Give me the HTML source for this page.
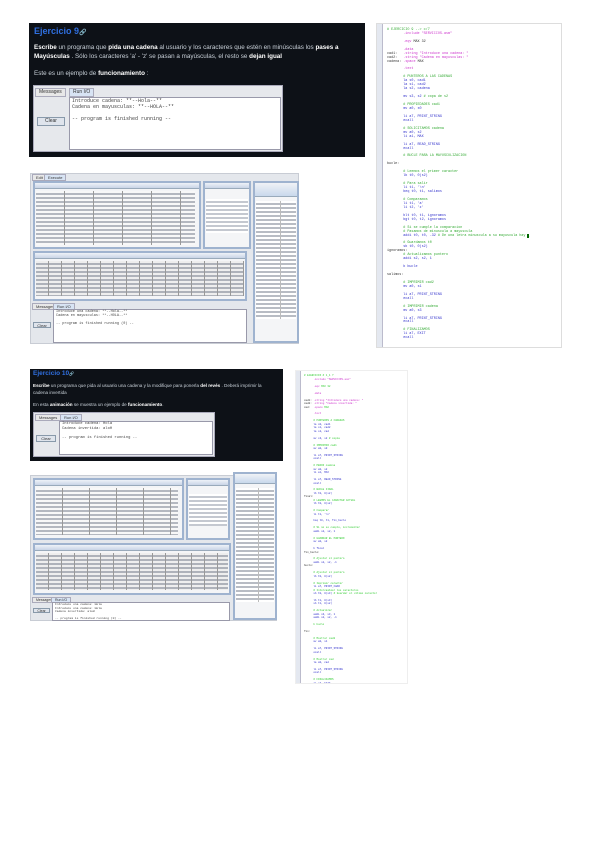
<!DOCTYPE html>
<html><head><meta charset="utf-8"><style>
*{margin:0;padding:0;box-sizing:border-box}
body{width:600px;height:848px;background:#fff;position:relative;overflow:hidden;font-family:"Liberation Sans",sans-serif}
.abs{position:absolute}
.dark{background:#0d1117;color:#c9d1d9}
.ttl{color:#2f6fe0;font-weight:bold}
.p{font-size:6.3px;white-space:nowrap;color:#c9d1d9}
.p b{color:#fff}
.win{background:#e6e8ec;border:1px solid #aab}
.tab{position:absolute;font-size:5px;border:1px solid #aab;background:#e8e8e8;padding:0 3px;line-height:7px;color:#333}
.ta{position:absolute;background:#fff;border:1px solid #99a;font-family:"Liberation Mono",monospace;color:#444;white-space:pre;font-size:5px;line-height:6px;padding-left:2px}
.btn{position:absolute;background:#dfe4ec;border:1px solid #8899aa;font-size:5px;text-align:center;color:#333}
.sim{background:#e4e7ec;border:1px solid #c8ccd4}
.pan{position:absolute;background:#f4f5f7;border:2px solid #9fb3cf}
.hdr{position:absolute;left:0;right:0;top:0;height:6px;background:linear-gradient(#eef2f8,#c8d4e6);border-bottom:1px solid #9ab}
.rows{position:absolute;left:1px;right:1px;bottom:1px;background:repeating-linear-gradient(#fff 0 2px,#c4c8d0 2px 4px)}
.grid{position:absolute;background:repeating-linear-gradient(90deg,transparent 0 12px,#999 12px 13px),repeating-linear-gradient(#eee 0 2px,#aeb2ba 2px 4px)}
.code{position:absolute;background:#fff;border:1px solid #ddd;font-family:"Liberation Mono",monospace;overflow:hidden}
.gut{position:absolute;left:0;top:0;bottom:0;background:#e4e8f0;border-right:1px solid #bbc}
.ln{position:absolute;white-space:pre}
</style></head><body>

<!-- Ejercicio 9 -->
<div class="abs dark" style="left:29px;top:23px;width:336px;height:134px"></div>
<div class="abs ttl" style="left:34px;top:26px;font-size:9px">Ejercicio 9<span style="font-size:6px;color:#aaa">🔗</span></div>
<div class="abs p" style="left:34px;top:44px"><b>Escribe</b> un programa que <b>pida una cadena</b> al usuario y los caracteres que estén en minúsculas los <b>pases a</b></div>
<div class="abs p" style="left:34px;top:53px"><b>Mayúsculas</b> . Sólo los caracteres 'a' - 'z' se pasan a mayúsculas, el resto se <b>dejan igual</b></div>
<div class="abs p" style="left:34px;top:70px">Este es un ejemplo de <b>funcionamiento</b> :</div>
<div class="abs win" style="left:33px;top:85px;width:250px;height:67px">
 <div class="tab" style="left:1px;top:2px">Messages</div>
 <div class="tab" style="left:35px;top:2px;background:#d8e4f4">Run I/O</div>
 <div class="btn" style="left:3px;top:31px;width:28px;height:9px;line-height:7px">Clear</div>
 <div class="ta" style="left:35px;top:11px;width:212px;height:53px">Introduce cadena: **--Hola--**
Cadena en mayusculas: **--HOLA--**

-- program is finished running --</div>
</div>

<!-- Simulator 1 -->
<div class="abs sim" style="left:30px;top:173px;width:269px;height:171px">
 <div class="tab" style="left:1px;top:0px;font-size:4px;line-height:5px">Edit</div>
 <div class="tab" style="left:13px;top:0px;font-size:4px;line-height:5px;background:#d8e4f4">Execute</div>
 <div class="pan" style="left:2px;top:7px;width:168px;height:68px"><div class="hdr"></div><div class="grid" style="left:1px;right:4px;top:8px;bottom:2px;background:repeating-linear-gradient(90deg,transparent 0 28px,#999 28px 29px),repeating-linear-gradient(#f8f8f8 0 2px,#b4b8c0 2px 4px)"></div></div>
 <div class="pan" style="left:172px;top:7px;width:48px;height:68px"><div class="hdr"></div><div class="rows" style="top:16px;bottom:14px"></div></div>
 <div class="pan" style="left:2px;top:77px;width:214px;height:50px"><div class="hdr"></div><div class="grid" style="left:1px;right:1px;top:8px;bottom:3px"></div></div>
 <div class="pan" style="left:222px;top:7px;width:46px;height:162px"><div class="hdr" style="height:14px;background:linear-gradient(#f0f2f6,#c8d8ec)"></div><div class="rows" style="top:18px;bottom:22px;background:repeating-linear-gradient(90deg,transparent 0 24px,#bbb 24px 25px),repeating-linear-gradient(#fff 0 2px,#b8bcc4 2px 4px)"></div></div>
 <div class="tab" style="left:1px;top:129px;font-size:4px;line-height:5px">Messages</div>
 <div class="tab" style="left:22px;top:129px;font-size:4px;line-height:5px;background:#d8e4f4">Run I/O</div>
 <div class="btn" style="left:2px;top:148px;width:18px;height:6px;font-size:4px;line-height:5px">Clear</div>
 <div class="ta" style="left:22px;top:135px;width:194px;height:34px;font-size:3.5px;line-height:4px">Introduce una cadena: **--Hola--**
Cadena en mayusculas: **--HOLA--**

-- program is finished running (0) --</div>
</div>

<!-- Code panel 1 -->
<div class="code" style="left:376px;top:23px;width:186px;height:325px;font-size:3.4px">
 <div class="gut" style="width:6px"></div>
 <div class="ln" style="left:10px;top:1px;line-height:3.95px;color:#3a3">
# EJERCICIO 9 --> c/7
<span style="color:#c3c">        .include "SERVICIOS.asm"</span>

<span style="color:#c3c">        .eqv</span> <span style="color:#333">MAX 32</span>

<span style="color:#c3c">        .data</span>
<span style="color:#333">cad1:</span>   <span style="color:#c3c">.string "Introduce una cadena: "</span>
<span style="color:#333">cad2:</span>   <span style="color:#c3c">.string "Cadena en mayusculas: "</span>
<span style="color:#333">cadena:</span> <span style="color:#c3c">.space</span> <span style="color:#333">MAX</span>

<span style="color:#c3c">        .text</span>

        # PUNTEROS A LAS CADENAS
<span style="color:#33c">        la s0, cad1
        la s1, cad2
        la s2, cadena</span>

<span style="color:#33c">        mv s3, s2</span> # copa de s2

        # PROPIEDADES cad1
<span style="color:#33c">        mv a0, s0</span>

<span style="color:#33c">        li a7, PRINT_STRING
        ecall</span>

        # SOLICITAMOS cadena
<span style="color:#33c">        mv a0, s2
        li a1, MAX</span>

<span style="color:#33c">        li a7, READ_STRING
        ecall</span>

        # BUCLE PARA LA MAYUSCULIZACION

<span style="color:#333">bucle:</span>

        # Leemos el primer caracter
<span style="color:#33c">        lb t0, 0(s2)</span>

        # Para salir
<span style="color:#33c">        li t1, '\n'
        beq t0, t1, salimos</span>

        # Comparamos
<span style="color:#33c">        li t1, 'a'
        li t2, 'z'</span>

<span style="color:#33c">        blt t0, t1, ignoramos
        bgt t0, t2, ignoramos</span>

        # Si se cumple la comparacion
        # Pasamos de minuscula a mayuscula
<span style="color:#33c">        addi t0, t0, -32</span> # De una letra minuscula a su mayuscula hay <span style="background:#060;color:#060">_</span>

        # Guardamos t0
<span style="color:#33c">        sb t0, 0(s2)</span>
<span style="color:#333">ignoramos:</span>
        # Actualizamos puntero
<span style="color:#33c">        addi s2, s2, 1</span>

<span style="color:#33c">        b bucle</span>

<span style="color:#333">salimos:</span>

        # IMPRIMIR cad2
<span style="color:#33c">        mv a0, s1</span>

<span style="color:#33c">        li a7, PRINT_STRING
        ecall</span>

        # IMPRIMIR cadena
<span style="color:#33c">        mv a0, s3</span>

<span style="color:#33c">        li a7, PRINT_STRING
        ecall</span>

        # FINALIZAMOS
<span style="color:#33c">        li a7, EXIT
        ecall</span></div>
</div>

<!-- Ejercicio 10 -->
<div class="abs dark" style="left:30px;top:369px;width:253px;height:92px"></div>
<div class="abs ttl" style="left:33px;top:370px;font-size:6.5px">Ejercicio 10<span style="font-size:4px;color:#aaa">🔗</span></div>
<div class="abs p" style="left:33px;top:383px;font-size:4.6px"><b>Escribe</b> un programa que pida al usuario una cadena y la modifique para ponerla <b>del revés</b> . Deberá imprimir la</div>
<div class="abs p" style="left:33px;top:390px;font-size:4.6px">cadena invertida</div>
<div class="abs p" style="left:33px;top:402px;font-size:4.6px">En esta <b>animación</b> se muestra un ejemplo de <b>funcionamiento</b>.</div>
<div class="abs win" style="left:33px;top:412px;width:182px;height:45px">
 <div class="tab" style="left:1px;top:1px;font-size:4px;line-height:5px">Messages</div>
 <div class="tab" style="left:26px;top:1px;font-size:4px;line-height:5px;background:#d8e4f4">Run I/O</div>
 <div class="btn" style="left:2px;top:22px;width:20px;height:7px;font-size:4px;line-height:6px">Clear</div>
 <div class="ta" style="left:25px;top:8px;width:154px;height:34px;font-size:3.8px;line-height:4.5px">Introduce cadena: Hola
Cadena invertida: aloH

-- program is finished running --</div>
</div>

<!-- Simulator 2 -->
<div class="abs sim" style="left:30px;top:475px;width:247px;height:146px">
 <div class="pan" style="left:2px;top:2px;width:151px;height:62px"><div class="hdr"></div><div class="grid" style="left:1px;right:4px;top:8px;bottom:3px;background:repeating-linear-gradient(90deg,transparent 0 26px,#999 26px 27px),repeating-linear-gradient(#f8f8f8 0 2px,#b4b8c0 2px 4px)"></div></div>
 <div class="pan" style="left:155px;top:2px;width:44px;height:62px"><div class="hdr"></div><div class="rows" style="top:14px;bottom:12px"></div></div>
 <div class="pan" style="left:2px;top:67px;width:198px;height:52px"><div class="hdr"></div><div class="grid" style="left:1px;right:1px;top:8px;bottom:3px"></div></div>
 <div class="pan" style="left:202px;top:-4px;width:44px;height:148px"><div class="hdr" style="height:10px;background:linear-gradient(#f0f2f6,#c8d8ec)"></div><div class="rows" style="top:14px;bottom:16px;background:repeating-linear-gradient(90deg,transparent 0 22px,#bbb 22px 23px),repeating-linear-gradient(#fff 0 2px,#b8bcc4 2px 4px)"></div></div>
 <div class="tab" style="left:1px;top:121px;font-size:3.5px;line-height:4px">Messages</div>
 <div class="tab" style="left:20px;top:121px;font-size:3.5px;line-height:4px;background:#d8e4f4">Run I/O</div>
 <div class="btn" style="left:2px;top:132px;width:17px;height:5px;font-size:3.5px;line-height:4px">Clear</div>
 <div class="ta" style="left:21px;top:126px;width:178px;height:19px;font-size:3px;line-height:3.5px">Introduce una cadena: Hola
Introduce una cadena: Hola
Cadena invertida: aloH

-- program is finished running (0) --</div>
</div>

<!-- Code panel 2 -->
<div class="code" style="left:295px;top:370px;width:113px;height:314px;font-size:2.6px;border-color:#eee">
 <div class="gut" style="width:5px"></div>
 <div class="ln" style="left:8px;top:0;line-height:3.45px;color:#3c3">
# EJERCICIO # 1_1 ?
<span style="color:#c3c">      .include "SERVICIOS.asm"</span>

<span style="color:#c3c">      .eqv</span> MAX 32

<span style="color:#c3c">      .data</span>

<span style="color:#333">cad1:</span> <span style="color:#c3c">.string "Introduce una cadena: "</span>
<span style="color:#333">cad2:</span> <span style="color:#c3c">.string "Cadena invertida: "</span>
<span style="color:#333">cad:</span>  <span style="color:#c3c">.space</span> MAX

<span style="color:#c3c">      .text</span>

      # PUNTEROS A CADENAS
<span style="color:#33c">      la s0, cad1
      la s1, cad2
      la s2, cad</span>

<span style="color:#33c">      mv s3, s2</span> # copia

      # IMPRIMIR cad1
<span style="color:#33c">      mv a0, s0</span>

<span style="color:#33c">      li a7, PRINT_STRING
      ecall</span>

      # PEDIR cadena
<span style="color:#33c">      mv a0, s2
      li a1, MAX</span>

<span style="color:#33c">      li a7, READ_STRING
      ecall</span>

      # BUCLE FINAL
<span style="color:#33c">      lb t0, 0(s2)</span>
<span style="color:#333">final:</span>
      # LEEMOS EL CARACTER ACTUAL
<span style="color:#33c">      lb t0, 0(s2)</span>

      # Comparar
<span style="color:#33c">      li t1, '\n'</span>

<span style="color:#33c">      beq t0, t1, fin_bucle</span>

      # Si no se cumple, incrementar
<span style="color:#33c">      addi s2, s2, 1</span>

      # GUARDAR EL PUNTERO
<span style="color:#33c">      mv a0, s2</span>

<span style="color:#33c">      b final</span>
<span style="color:#333">fin_bucle:</span>

      # Ajustar el puntero
<span style="color:#33c">      addi s2, s2, -1</span>
<span style="color:#333">bucle:</span>

      # Ajustar el puntero
<span style="color:#33c">      lb t0, 0(s2)</span>

      # Imprimir caracter
<span style="color:#33c">      li a7, PRINT_CHAR</span>
      # Intercambiar los caracteres
<span style="color:#33c">      sb t0, 0(s3)</span> # Guardar el ultimo caracter

<span style="color:#33c">      lb t1, 0(s3)
      sb t1, 0(s2)</span>

      # Actualizar
<span style="color:#33c">      addi s3, s3, 1
      addi s2, s2, -1</span>

      b bucle

<span style="color:#333">fin:</span>

      # Mostrar cad2
<span style="color:#33c">      mv a0, s1</span>

<span style="color:#33c">      li a7, PRINT_STRING
      ecall</span>

      # Mostrar cad
<span style="color:#33c">      la a0, cad</span>

<span style="color:#33c">      li a7, PRINT_STRING
      ecall</span>

      # FINALIZAMOS
<span style="color:#33c">      li a7, EXIT
      ecall</span></div>
</div>
</body></html>
